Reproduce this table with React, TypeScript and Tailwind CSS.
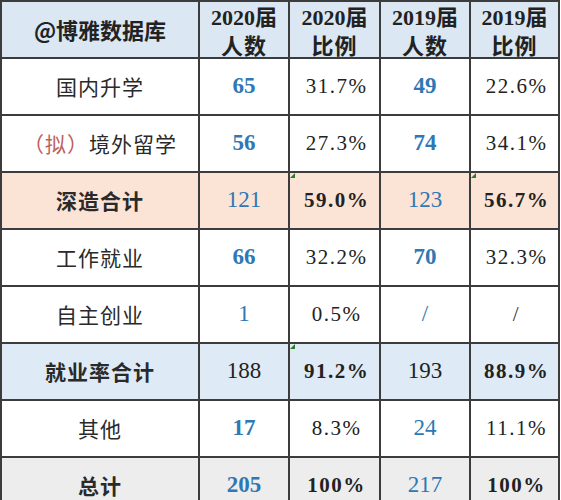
import React from 'react'

type Cell = { text: string; kind: 'num' | 'pct' | 'plain'; bold?: boolean; blue?: boolean; mark?: boolean }
type Row = { label: React.ReactNode; bg: string; boldLabel?: boolean; cells: Cell[] }

const n = (text: string, blue = true, bold = true): Cell => ({ text, kind: 'num', blue, bold })
const p = (text: string, bold = false, mark = false): Cell => ({ text, kind: 'pct', bold, mark })

const ROWS: Row[] = [
  { label: '国内升学', bg: 'bg-white', cells: [n('65'), p('31.7%'), n('49'), p('22.6%')] },
  {
    label: (
      <>
        <span className="text-[#c0605c]">（拟）</span>境外留学
      </>
    ),
    bg: 'bg-white',
    cells: [n('56'), p('27.3%'), n('74'), p('34.1%')],
  },
  { label: '深造合计', bg: 'bg-[#fbe3d6]', boldLabel: true, cells: [n('121', true, false), p('59.0%', true, true), n('123', true, false), p('56.7%', true, true)] },
  { label: '工作就业', bg: 'bg-white', cells: [n('66'), p('32.2%'), n('70'), p('32.3%')] },
  { label: '自主创业', bg: 'bg-white', cells: [n('1', true, false), p('0.5%'), n('/', true, false), { text: '/', kind: 'plain' }] },
  { label: '就业率合计', bg: 'bg-[#deebf6]', boldLabel: true, cells: [n('188', false, false), p('91.2%', true, true), n('193', false, false), p('88.9%', true)] },
  { label: '其他', bg: 'bg-white', cells: [n('17'), p('8.3%'), n('24', true, false), p('11.1%')] },
  { label: '总计', bg: 'bg-[#ededed]', boldLabel: true, cells: [n('205'), p('100%', true), n('217', true, false), p('100%', true)] },
]

function HeaderCell({ year, sub }: { year: string; sub: string }) {
  return (
    <div className="flex h-[55px] flex-col items-center justify-center bg-[#dbe7f3] text-[22px] font-bold leading-[27px] text-[#222]">
      <span>
        <span className="font-['Liberation_Serif',serif]">{year}</span>
        <span className="font-['Noto_Sans_CJK_SC',sans-serif]">届</span>
      </span>
      <span className="font-['Noto_Sans_CJK_SC',sans-serif] tracking-[1px]">{sub}</span>
    </div>
  )
}

function DataCell({ cell, bg }: { cell: Cell; bg: string }) {
  const color = cell.kind === 'plain' ? 'text-[#333]' : cell.blue ? 'text-[#2f78b4]' : 'text-[#222]'
  const weight = cell.bold ? 'font-bold' : 'font-normal'
  const size = cell.kind === 'num' ? 'text-[23px]' : 'text-[21px] tracking-[1.5px] pl-1'
  return (
    <div className={`relative flex h-[55px] items-center justify-center ${bg}`}>
      {cell.mark && (
        <span className="absolute left-0 top-0 h-0 w-0 rotate-90 border-l-[5px] border-t-[5px] border-l-transparent border-t-[#2d7a2d]" />
      )}
      <span className={`font-['Liberation_Serif',serif] ${size} ${weight} ${color}`}>{cell.text}</span>
    </div>
  )
}

export default function App() {
  return (
    <div className="h-[500px] w-[561px] overflow-hidden bg-white">
      <div className="grid w-[560px] grid-cols-[196px_88px_89px_88px_87px] gap-[2px] bg-[#3c3c3c] p-[2px]">
        <div className="flex h-[55px] items-center justify-center bg-[#dbe7f3] font-['Noto_Sans_CJK_SC',sans-serif] text-[22px] font-bold text-[#222]">
          @博雅数据库
        </div>
        <HeaderCell year="2020" sub="人数" />
        <HeaderCell year="2020" sub="比例" />
        <HeaderCell year="2019" sub="人数" />
        <HeaderCell year="2019" sub="比例" />

        {ROWS.map((row, i) => (
          <React.Fragment key={i}>
            <div
              className={`flex h-[55px] items-center justify-center font-['Noto_Sans_CJK_SC',sans-serif] text-[21px] tracking-[1px] text-[#2a2a2a] ${row.bg} ${row.boldLabel ? 'font-bold' : 'font-normal'}`}
            >
              {row.label}
            </div>
            {row.cells.map((c, j) => (
              <DataCell key={j} cell={c} bg={row.bg} />
            ))}
          </React.Fragment>
        ))}
      </div>
    </div>
  )
}
